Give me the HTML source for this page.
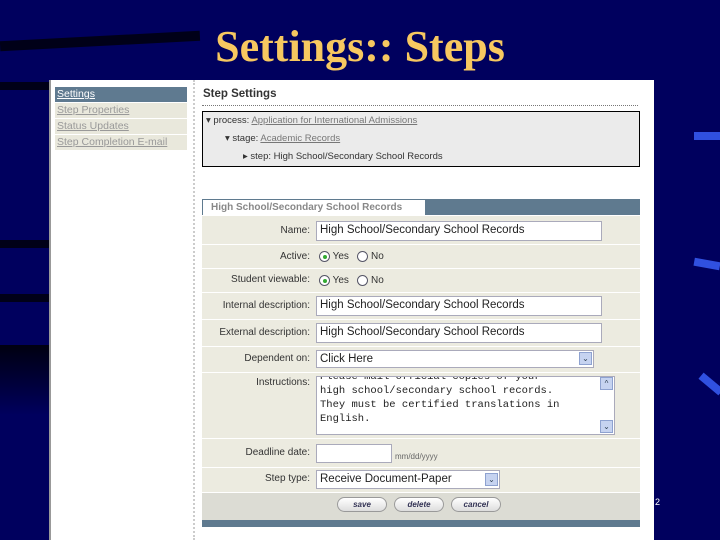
<!DOCTYPE html>
<html><head><style>
*{margin:0;padding:0;box-sizing:border-box}
body{width:720px;height:540px;overflow:hidden;background:#00005e;position:relative;font-family:"Liberation Sans",sans-serif}
.a{position:absolute}
.stripe{position:absolute;height:8px;background:#000018}
h1{position:absolute;left:0;width:720px;top:21px;text-align:center;font-family:"Liberation Serif",serif;font-weight:bold;font-size:44px;color:#f7c860}
.panel{position:absolute;left:49px;top:80px;width:605px;height:460px;background:#fff;border-left:2px solid #999}
.side{position:absolute;left:4px;width:132px;height:15px;font-size:10.5px;color:#999;text-decoration:underline;padding-left:2px;background:#e9e8dc;line-height:15px}
.lbl{position:absolute;width:108px;text-align:right;font-size:10px;color:#333}
.inp{position:absolute;background:#fff;border:1px solid #aab;font-size:11.5px;color:#222;padding-left:3px;line-height:17px}
.row{position:absolute;left:151px;width:438px;background:#ecebe0}
.sel{position:absolute;width:13px;height:13px;background:#c6d3f0;border:1px solid #8ea2d0;font-size:8px;color:#345;text-align:center;line-height:12px}
.rad{display:inline-block;width:11px;height:11px;border:1px solid #556;border-radius:50%;background:#fff;vertical-align:middle;position:relative}
.rad.on:after{content:"";position:absolute;left:3px;top:3px;width:4px;height:4px;border-radius:50%;background:#3a3}
.btn{position:absolute;top:497px;width:50px;height:15px;border:1px solid #999;border-radius:8px;background:linear-gradient(#fff,#ddd);font-size:8px;font-style:italic;font-weight:bold;color:#335;text-align:center;line-height:13px}
</style></head><body>
<div class="stripe" style="left:0;top:36px;width:200px;height:10px;transform:rotate(-3deg)"></div>
<div class="stripe" style="left:0;top:82px;width:50px"></div>
<div class="stripe" style="left:0;top:240px;width:50px"></div>
<div class="stripe" style="left:0;top:294px;width:50px"></div>
<div class="a" style="left:0;top:345px;width:50px;height:70px;background:linear-gradient(#000010,#00005e)"></div>
<div class="a" style="left:694px;top:132px;width:26px;height:8px;background:#3050e0"></div>
<div class="a" style="left:694px;top:260px;width:26px;height:8px;background:#3050e0;transform:rotate(10deg)"></div>
<div class="a" style="left:698px;top:380px;width:26px;height:8px;background:#3050e0;transform:rotate(40deg)"></div>
<h1>Settings:: Steps</h1>
<div class="panel">
<div class="side" style="top:7px;background:#5f7a90;color:#fff">Settings</div>
<div class="side" style="top:23px">Step Properties</div>
<div class="side" style="top:39px">Status Updates</div>
<div class="side" style="top:55px">Step Completion E-mail</div>
<div class="a" style="left:142px;top:0;width:0;height:460px;border-left:2px dotted #ccc"></div>
<div class="a" style="left:152px;top:8px;font-size:11.5px;font-weight:bold;color:#333">Step Settings</div>
<div class="a" style="left:151px;top:25px;width:436px;border-top:1px dotted #777"></div>
<div class="a" style="left:151px;top:31px;width:438px;height:56px;background:#ebebeb;border:1px solid #000;font-size:9.5px;color:#333">
<div class="a" style="left:3px;top:3px">▾ process: <u style="color:#777">Application for International Admissions</u></div>
<div class="a" style="left:22px;top:21px">▾ stage: <u style="color:#777">Academic Records</u></div>
<div class="a" style="left:40px;top:39px">▸ step: High School/Secondary School Records</div>
</div>
<div class="a" style="left:151px;top:119px;width:438px;height:16px;background:#5f7a8f"></div>
<div class="a" style="left:152px;top:120px;width:222px;height:15px;background:#fff;font-size:10px;font-weight:bold;color:#888;padding-left:8px;line-height:15px">High School/Secondary School Records</div>
<div class="row" style="top:136px;height:28px"></div>
<div class="row" style="top:165px;height:23px"></div>
<div class="row" style="top:189px;height:23px"></div>
<div class="row" style="top:213px;height:26px"></div>
<div class="row" style="top:240px;height:26px"></div>
<div class="row" style="top:267px;height:25px"></div>
<div class="row" style="top:293px;height:65px"></div>
<div class="row" style="top:359px;height:28px"></div>
<div class="row" style="top:388px;height:24px"></div>
<div class="row" style="top:413px;height:27px;background:#dcdcd4"></div>
<div class="row" style="top:440px;height:7px;background:#5f7a8f"></div>
<div class="lbl" style="left:151px;top:145px">Name:</div>
<div class="inp" style="left:265px;top:141px;width:286px;height:20px">High School/Secondary School Records</div>
<div class="lbl" style="left:151px;top:171px">Active:</div>
<div class="a" style="left:268px;top:171px;font-size:10px;color:#333"><span class="rad on"></span> Yes &nbsp; <span class="rad"></span> No</div>
<div class="lbl" style="left:151px;top:194px">Student viewable:</div>
<div class="a" style="left:268px;top:195px;font-size:10px;color:#333"><span class="rad on"></span> Yes &nbsp; <span class="rad"></span> No</div>
<div class="lbl" style="left:151px;top:220px">Internal description:</div>
<div class="inp" style="left:265px;top:216px;width:286px;height:20px">High School/Secondary School Records</div>
<div class="lbl" style="left:151px;top:247px">External description:</div>
<div class="inp" style="left:265px;top:243px;width:286px;height:20px">High School/Secondary School Records</div>
<div class="lbl" style="left:151px;top:273px">Dependent on:</div>
<div class="inp" style="left:265px;top:270px;width:278px;height:18px">Click Here</div>
<div class="sel" style="left:528px;top:272px">⌄</div>
<div class="lbl" style="left:151px;top:297px">Instructions:</div>
<div class="inp" style="left:265px;top:296px;width:299px;height:59px;font-family:'Liberation Mono',monospace;font-size:10.5px;line-height:14px;overflow:hidden;padding-top:0"><div style="margin-top:-7px">Please mail official copies of your<br>high school/secondary school records.<br>They must be certified translations in<br>English.</div></div>
<div class="sel" style="left:549px;top:297px">^</div>
<div class="sel" style="left:549px;top:340px">⌄</div>
<div class="lbl" style="left:151px;top:367px">Deadline date:</div>
<div class="inp" style="left:265px;top:364px;width:76px;height:19px"></div>
<div class="a" style="left:344px;top:372px;font-size:8px;color:#666">mm/dd/yyyy</div>
<div class="lbl" style="left:151px;top:393px">Step type:</div>
<div class="inp" style="left:265px;top:390px;width:184px;height:19px">Receive Document-Paper</div>
<div class="sel" style="left:434px;top:393px">⌄</div>
</div>
<div class="btn" style="left:337px">save</div>
<div class="btn" style="left:394px">delete</div>
<div class="btn" style="left:451px">cancel</div>
<div class="a" style="left:655px;top:497px;font-size:9px;color:#fff">2</div>
</body></html>
